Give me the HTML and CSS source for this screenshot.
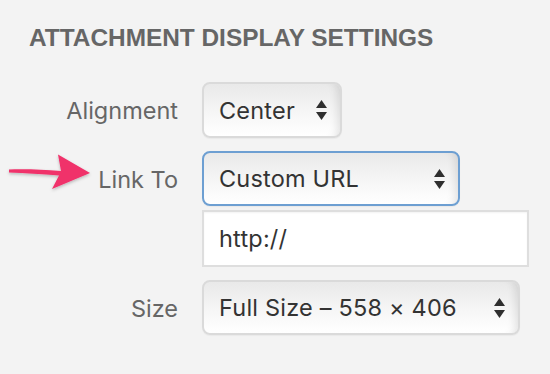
FILE: index.html
```html
<!DOCTYPE html>
<html lang="en">
<head>
    <meta charset="UTF-8">
    <meta name="viewport" content="width=device-width, initial-scale=1.0">
    <title>Attachment Display Settings</title>
    <link rel="stylesheet" href="styles.css">
</head>
<body>
    <div class="settings">
        <h2 class="settings-title">ATTACHMENT DISPLAY SETTINGS</h2>

        <div class="fields">
            <div class="field-label">Alignment</div>
            <div class="select select-align">
                <span class="select-value">Center</span>
                <svg class="select-arrows" width="11" height="20" viewBox="0 0 11 20"><path d="M5.5 0L11 8H0z M0 12h11L5.5 20z" fill="#2f2f2f"/></svg>
            </div>

            <div class="field-label">Link To</div>
            <div class="control-stack">
                <div class="select select-link is-focused">
                    <span class="select-value">Custom URL</span>
                    <svg class="select-arrows" width="11" height="20" viewBox="0 0 11 20"><path d="M5.5 0L11 8H0z M0 12h11L5.5 20z" fill="#2f2f2f"/></svg>
                </div>
                <div class="text-input">http://</div>
            </div>

            <div class="field-label">Size</div>
            <div class="select select-size">
                <span class="select-value">Full Size – 558 × 406</span>
                <svg class="select-arrows" width="11" height="20" viewBox="0 0 11 20"><path d="M5.5 0L11 8H0z M0 12h11L5.5 20z" fill="#2f2f2f"/></svg>
            </div>
        </div>

        <!-- annotation arrow pointing at "Link To" -->
        <svg class="pointer-arrow" width="100" height="50" viewBox="0 0 100 50">
            <defs>
                <filter id="arrowShadow" x="-20%" y="-40%" width="140%" height="180%">
                    <feDropShadow dx="0" dy="1.5" stdDeviation="1.5" flood-color="#000" flood-opacity="0.25"/>
                </filter>
            </defs>
            <path d="M9 19.5 C 25 19, 42 19.5, 61 21 L 58 4.5 L 90 23 L 52 39 L 59 25.5 C 42 24, 25 23, 9 22.5 Z" fill="#f0306b" filter="url(#arrowShadow)"/>
        </svg>
    </div>
</body>
</html>
```

FILE: styles.css
```css
* {
    box-sizing: border-box;
}
body {
    margin: 0;
    background-color: #f3f3f3;
    font-family: Inter, 'Liberation Sans', sans-serif;
    color: #333;
}
.settings {
    position: relative;
    height: 374px;
}
.settings-title {
    margin: 0;
    padding: 24px 0 0 29px;
    font-family: 'Liberation Sans', Arial, sans-serif;
    font-size: 24.4px;
    font-weight: bold;
    line-height: 28px;
    color: #666;
}
.fields {
    display: grid;
    grid-template-columns: 178px auto;
    column-gap: 24px;
    row-gap: 13px;
    align-items: start;
    margin-top: 30px;
}
.field-label {
    height: 56px;
    display: flex;
    align-items: center;
    justify-content: flex-end;
    font-size: 23.5px;
    color: #666;
}
.control-stack {
    display: flex;
    flex-direction: column;
    gap: 4px;
}
.select {
    display: flex;
    align-items: center;
    justify-content: space-between;
    height: 56px;
    padding: 0 13px 0 15px;
    border: 2px solid #dadada;
    border-radius: 8px;
    background: linear-gradient(to bottom, #e9e9e9 0%, #f6f6f6 55%, #ffffff 100%);
    box-shadow: inset -10px 0 10px -8px rgba(0, 0, 0, 0.12), 0 1px 1px rgba(0, 0, 0, 0.04);
    font-size: 23.5px;
    letter-spacing: 0.2px;
    color: #333;
}
.select.is-focused {
    border-color: #6d9fd2;
}
.select-align {
    width: 140px;
}
.select-link {
    width: 258px;
    height: 55px;
}
.select-size {
    width: 318px;
    height: 55px;
}
.select-arrows {
    flex-shrink: 0;
}
.text-input {
    width: 327px;
    height: 57px;
    display: flex;
    align-items: center;
    padding: 0 15px;
    background-color: #fff;
    border: 2px solid #dedede;
    box-shadow: inset 0 1px 2px rgba(0, 0, 0, 0.05);
    font-size: 23.5px;
    letter-spacing: 0.2px;
    color: #333;
}
.pointer-arrow {
    position: absolute;
    left: 0;
    top: 150px;
}
```
